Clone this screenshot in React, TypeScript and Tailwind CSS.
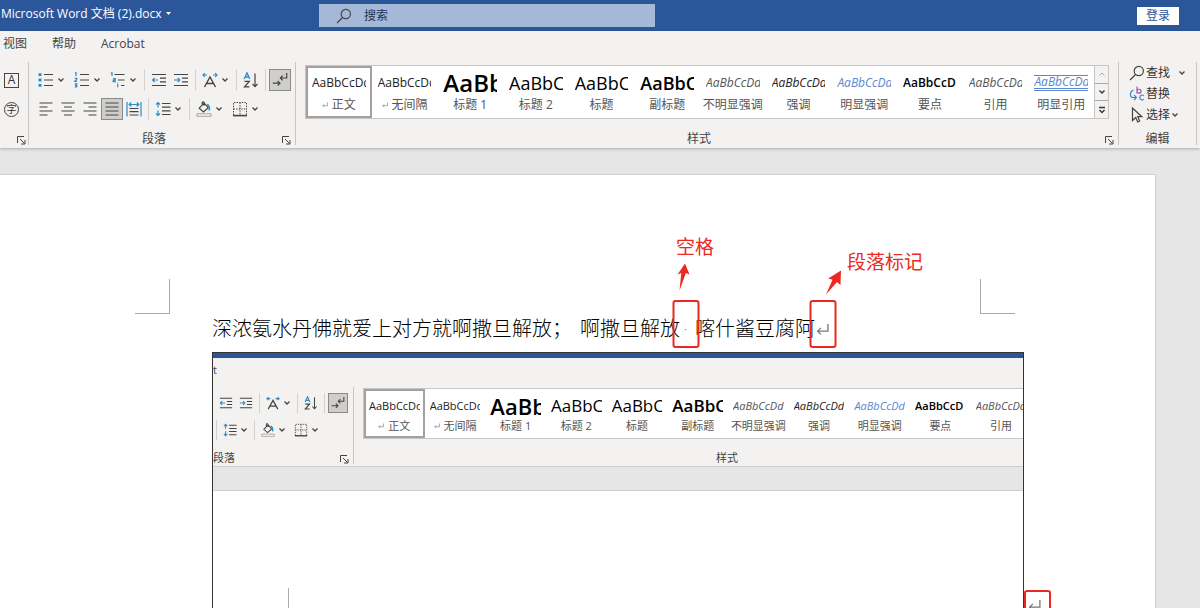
import React from 'react';

type Sized = { small?: boolean };

const Svg = ({ children, size = 16 }: { children: React.ReactNode; size?: number }) => (
  <svg width={size} height={size} viewBox="0 0 16 16" fill="none" stroke="#444" strokeWidth="1.2" className="shrink-0">
    {children}
  </svg>
);

const BLUE = '#2e8bc9';

const icons: Record<string, React.ReactNode> = {
  bullets: (
    <>
      <path d="M6 2.5h9M6 8h9M6 13.5h9" />
      <path d="M.5 1.2h3v2.800h-3zM.5 6.600h3v2.800h-3zM.5 12h3v2.800h-3z" fill={BLUE} stroke="none" />
    </>
  ),
  numbering: (
    <>
      <path d="M6 2.5h9M6 8h9M6 13.5h9" />
      <path d="M1 1.3l1-.6V4M.8 6.4h1.9v1.2L.9 9.3h2M.8 11.8h1.9v3H.8M1 13.3h1.6" stroke={BLUE} />
    </>
  ),
  multilevel: (
    <>
      <path d="M4.5 2.5h10M8 8h6.5M11 13.5h3.5" />
      <path d="M1 1.3l1-.6V4M3.2 6.7h2v3h-2V8.2h2M7.7 12v3.2M7.7 10.4v.8" stroke={BLUE} />
    </>
  ),
  outdent: (
    <>
      <path d="M1 2.5h14M9 6.2h6M9 9.8h6M1 13.5h14" />
      <path d="M7 8H1.5M3.7 5.8L1.5 8l2.2 2.2" stroke={BLUE} />
    </>
  ),
  indent: (
    <>
      <path d="M1 2.5h14M9 6.2h6M9 9.8h6M1 13.5h14" />
      <path d="M1 8h5.8M4.6 5.8L6.8 8l-2.2 2.2" stroke={BLUE} />
    </>
  ),
  asian: (
    <>
      <path d="M2.500 15L8 5l5.500 10M4.600 11.500h6.800" strokeWidth="1.4" />
      <path d="M5 3H1M2.8 1.2L1 3l1.8 1.8M11 3h4M13.2 1.2L15 3l-1.8 1.8" stroke={BLUE} />
    </>
  ),
  sort: (
    <>
      <path d="M1.2 7L4 .8 6.8 7M2.2 5h3.6" stroke={BLUE} strokeWidth="1.3" />
      <path d="M1.5 9.3h4.8l-4.8 5.6h5" strokeWidth="1.3" />
      <path d="M12 1.5v13M9.5 12l2.5 2.6 2.5-2.6" />
    </>
  ),
  marks: (
    <>
      <path d="M14.7 1v5H8.5M10.7 3.6L8.3 6l2.4 2.4" />
      <path d="M.8 11.2h7M5.6 8.8L8 11.2l-2.4 2.4" />
    </>
  ),
  left: <path d="M1.5 2h13M1.5 6h8M1.5 10h13M1.5 14h8" />,
  center: <path d="M1.5 2h13M4 6h8M1.5 10h13M4 14h8" />,
  right: <path d="M1.5 2h13M6.5 6h8M1.5 10h13M6.5 14h8" />,
  justify: <path d="M1.5 2h13M1.5 6h13M1.5 10h13M1.5 14h13" />,
  distribute: (
    <>
      <path d="M3.5 7.5h9M3.5 10.7h9M3.5 14h9" />
      <path d="M1 1v14.5M15 1v14.5M3.2 3.5h9.6M5.2 1.5l-2 2 2 2M10.8 1.5l2 2-2 2" stroke={BLUE} />
    </>
  ),
  spacing: (
    <>
      <path d="M7 2.5h8.5M7 6.2h8.5M7 9.8h8.5M7 13.5h8.5" />
      <path d="M3 1.5v5M1 3.5l2-2 2 2M3 9.5v5M1 12.5l2 2 2-2" stroke={BLUE} />
    </>
  ),
  shading: (
    <>
      <path d="M3.2 7.2l5-5 4 4.5-4.7 4.3zM6.2 4V1.4c0-.9 2-.9 2 .3v3" />
      <path d="M11 3.5c2 .6 2.7 2.7 2.3 6" stroke={BLUE} strokeWidth="1.6" />
      <path d="M1 12.8h14v2.4H1z" stroke="#888" strokeWidth="0.8" fill="#fff" />
    </>
  ),
  borders: (
    <>
      <path d="M1.5 14V1.5h13V14M8 1.5V14M1.5 8h13" strokeDasharray="1.4 1.2" strokeWidth="1" />
      <path d="M1 14.6h14" strokeWidth="1.6" />
    </>
  ),
  search: (
    <>
      <circle cx="9.8" cy="6" r="4.6" />
      <path d="M6.5 9.5L1 15" />
    </>
  ),
  replace: (
    <>
      <path d="M8 .5v7M8 5.2c0-2.6 4-2.6 4 0s-4 2.6-4 0" stroke="#a64dbb" />
      <path d="M14.8 9.8c-1.6-1.6-4-.6-4 1.7s2.4 3.3 4 1.6" stroke={BLUE} />
      <path d="M4.5 4C.5 5.5.5 11.5 4 11.5h3M5 9l2.4 2.5L5 14" stroke={BLUE} />
    </>
  ),
  cursor: <path d="M3.5 1v12.5l3.2-3 2 4.5 2-1-2-4.3h4.2z" />,
};

const Chevron = ({ small }: Sized) => (
  <span className={`flex shrink-0 items-center ${small ? 'w-[11px]' : 'w-3'}`}>
    <svg width="8" height="6" viewBox="0 0 8 6" fill="none" stroke="#444" strokeWidth="1.3">
      <path d="M1.5 1.5L4 4l2.5-2.5" />
    </svg>
  </span>
);

const Tool = ({ icon, label, small, active, menu }: Sized & { icon: string; label: string; active?: boolean; menu?: boolean }) => (
  <button type="button" aria-label={label} className="flex shrink-0 items-center">
    <span
      className={`flex items-center justify-center ${small ? 'size-5' : 'size-[22px]'} ${
        active ? 'border border-[#8a8a8a] bg-[#cfcecd]' : ''
      }`}
    >
      <Svg size={small ? 14 : 16}>{icons[icon]}</Svg>
    </span>
    {menu && <Chevron small={small} />}
  </button>
);

const Divider = () => <span className="mx-[3px] w-px self-stretch bg-[#d4d3d2]" />;

const Launcher = ({ label }: { label: string }) => (
  <button type="button" aria-label={label} className="mr-1 flex w-3 shrink-0 items-end justify-end self-end">
    <svg width="9" height="9" viewBox="0 0 9 9" fill="none" stroke="#444">
      <path d="M.5 7V.5H7M3 3l4.5 4.5M8 4v4H4" />
    </svg>
  </button>
);

const ReturnMark = ({ size }: { size: number }) => (
  <svg width={size} height={size} viewBox="0 0 12 12" fill="none" stroke="#777" strokeWidth="1.2">
    <path d="M11 1v6.5H1.5M4.5 4.5l-3 3 3 3" />
  </svg>
);

const STYLES = [
  { name: '正文', mark: true, kind: 'body' },
  { name: '无间隔', mark: true, kind: 'body' },
  { name: '标题 1', kind: 'h1' },
  { name: '标题 2', kind: 'h2' },
  { name: '标题', kind: 'h2' },
  { name: '副标题', kind: 'sub' },
  { name: '不明显强调', kind: 'subtle' },
  { name: '强调', kind: 'em' },
  { name: '明显强调', kind: 'accent' },
  { name: '要点', kind: 'strong' },
  { name: '引用', kind: 'subtle' },
  { name: '明显引用', kind: 'quote' },
];

const previewColor: Record<string, string> = {
  body: 'text-[#222]',
  h1: 'text-black font-semibold',
  h2: 'text-black',
  sub: 'text-black font-semibold',
  subtle: 'text-[#555] italic',
  em: 'text-[#222] italic',
  accent: 'text-[#5b87cf] italic',
  strong: 'text-black font-semibold',
  quote: 'text-[#5b87cf] italic',
};

const previewText: Record<string, string> = {
  h1: 'AaBb',
  h2: 'AaBbC',
  sub: 'AaBbC',
  strong: 'AaBbCcD',
};

const previewSize = (kind: string, small?: boolean) => {
  if (kind === 'h1') return small ? 'text-[22px]' : 'text-[24px]';
  if (kind === 'h2' || kind === 'sub') return small ? 'text-[17px]' : 'text-[18px]';
  return small ? 'text-[11px]' : 'text-[12px]';
};

const Gallery = ({ small }: Sized) => (
  <div className={`flex border border-[#c8c6c4] bg-white ${small ? 'h-[51px]' : 'h-[54px]'}`}>
    {STYLES.map(({ name, mark, kind }, i) => (
      <button
        key={name}
        type="button"
        className={`flex min-w-0 flex-1 basis-0 flex-col items-stretch ${small ? 'px-[5px] pt-1' : 'px-[6px] pt-[3px]'} ${
          i === 0 ? 'outline-2 -outline-offset-2 outline-[#a3a2a1]' : ''
        }`}
      >
        <span className={`flex items-center overflow-hidden ${small ? 'h-[26px]' : 'h-7'}`}>
          <span
            className={`w-full overflow-hidden text-left whitespace-nowrap ${small ? 'leading-[26px]' : 'leading-7'} ${previewSize(kind, small)} ${previewColor[kind]}`}
          >
            {kind === 'quote' ? (
              <span className="block border-t border-b-3 border-double border-[#5b87cf] leading-3">AaBbCcDd</span>
            ) : (
              previewText[kind] ?? 'AaBbCcDd'
            )}
          </span>
        </span>
        <span
          className={`flex items-center justify-center gap-1 whitespace-nowrap text-[#555] ${
            small ? 'text-[11px] leading-[14px]' : 'text-[12px] leading-4'
          }`}
        >
          {mark && <ReturnMark size={6} />}
          {name}
        </span>
      </button>
    ))}
    <div className="flex w-3.5 shrink-0 flex-col border-l border-[#c8c6c4] bg-[#f3f2f1]">
      <button type="button" aria-label="上一行" className="flex flex-1 items-center justify-center">
        <svg width="8" height="6" viewBox="0 0 8 6" fill="none" stroke="#aaa"><path d="M1.5 4.5L4 2l2.5 2.5" /></svg>
      </button>
      <button type="button" aria-label="下一行" className="flex flex-1 items-center justify-center border-y border-[#aaa]">
        <svg width="8" height="6" viewBox="0 0 8 6" fill="none" stroke="#333" strokeWidth="1.3"><path d="M1.5 1.5L4 4l2.5-2.5" /></svg>
      </button>
      <button type="button" aria-label="其他" className="flex flex-1 items-center justify-center">
        <svg width="8" height="8" viewBox="0 0 8 8" fill="none" stroke="#333" strokeWidth="1.3"><path d="M1 1.5h6M1.5 4L4 6.5 6.5 4" /></svg>
      </button>
    </div>
  </div>
);

const GroupFooter = ({ label, small, launcher, start }: Sized & { label: string; launcher?: boolean; start?: boolean }) => (
  <div className={`mt-auto flex h-3 items-center leading-3 text-[#444] ${small ? 'text-[11px]' : 'text-[12px]'}`}>
    <span className={`flex-1 ${start ? 'text-left' : 'text-center'}`}>{label}</span>
    {launcher && <Launcher label={`${label}设置`} />}
  </div>
);

const StylesGroup = ({ small }: Sized) => (
  <section
    className={`flex flex-col border-r border-[#c8c6c4] ${small ? 'w-[763px] shrink-0 pt-px' : 'min-w-0 flex-1 pt-[3px]'}`}
  >
    <div className="px-[9px]">
      <Gallery small={small} />
    </div>
    <GroupFooter label="样式" small={small} launcher />
  </section>
);

const Ribbon = () => (
  <div className="flex h-[83px] pr-[3px]">
    <section className="flex w-[29px] shrink-0 flex-col border-r border-[#c8c6c4] pt-[7px]">
      <div className="flex flex-col gap-[7px]">
        <button type="button" aria-label="字符边框" className="flex h-[22px] items-center pl-1">
          <span className="flex size-[15px] items-center justify-center border border-[#444] text-[12px] leading-3 text-[#333]">A</span>
        </button>
        <button type="button" aria-label="带圈字符" className="flex h-[22px] items-center pl-1">
          <span className="flex size-[15px] items-center justify-center rounded-full border border-[#444] text-[10px] leading-3 text-[#333]">字</span>
        </button>
      </div>
      <div className="-mr-[2px] mt-auto flex h-3 justify-end">
        <Launcher label="字体设置" />
      </div>
    </section>

    <section className="flex w-[267px] shrink-0 flex-col border-r border-[#c8c6c4] pt-[7px]">
      <div className="flex flex-col gap-[7px] pl-1.5">
        <div className="flex">
          <div className="flex gap-[2px]">
            <Tool icon="bullets" label="项目符号" menu />
            <Tool icon="numbering" label="编号" menu />
            <Tool icon="multilevel" label="多级列表" menu />
          </div>
          <Divider />
          <Tool icon="outdent" label="减少缩进量" />
          <Tool icon="indent" label="增加缩进量" />
          <Divider />
          <Tool icon="asian" label="中文版式" menu />
          <Divider />
          <Tool icon="sort" label="排序" />
          <Divider />
          <Tool icon="marks" label="显示编辑标记" active />
        </div>
        <div className="flex">
          <Tool icon="left" label="左对齐" />
          <Tool icon="center" label="居中" />
          <Tool icon="right" label="右对齐" />
          <Tool icon="justify" label="两端对齐" active />
          <Tool icon="distribute" label="分散对齐" />
          <Divider />
          <Tool icon="spacing" label="行距" menu />
          <Divider />
          <div className="flex gap-[2px]">
            <Tool icon="shading" label="底纹" menu />
            <Tool icon="borders" label="边框" menu />
          </div>
        </div>
      </div>
      <GroupFooter label="段落" launcher />
    </section>

    <StylesGroup />

    <section className="flex w-[78px] shrink-0 flex-col border-r border-[#c8c6c4] text-[12px] text-[#333]">
      <button type="button" className="flex h-[21px] items-center pl-[10px]">
        <Svg>{icons.search}</Svg>
        <span className="mr-2 ml-px">查找</span>
        <Chevron />
      </button>
      <button type="button" className="flex h-[21px] items-center pl-[10px]">
        <Svg>{icons.replace}</Svg>
        <span className="ml-px">替换</span>
      </button>
      <button type="button" className="flex h-[21px] items-center pl-[10px]">
        <Svg>{icons.cursor}</Svg>
        <span className="mr-px ml-px">选择</span>
        <Chevron />
      </button>
      <GroupFooter label="编辑" />
    </section>
  </div>
);

/* Picture pasted into the document: a cropped view of the same ribbon */
const PastedShot = () => (
  <figure className="flex h-[262px] min-w-0 flex-1 flex-col overflow-hidden border border-[#333] bg-white">
    <div className="h-[5px] shrink-0 bg-[#2b579a]" />
    <div className="shrink-0 border-b border-[#cfcecd] bg-[#f3f2f1] pb-[2px]">
      <div className="h-[29px] pt-1 text-[11px] leading-4 text-[#444]">t</div>
      <div className="flex h-[77px] overflow-hidden">
        <section className="flex w-[141px] shrink-0 flex-col border-r border-[#c8c6c4] pt-[6px]">
          <div className="flex flex-col gap-[7px]">
            <div className="flex pl-[3px]">
              <Tool small icon="outdent" label="减少缩进量" />
              <Tool small icon="indent" label="增加缩进量" />
              <Divider />
              <Tool small icon="asian" label="中文版式" menu />
              <Divider />
              <Tool small icon="sort" label="排序" />
              <Divider />
              <Tool small icon="marks" label="显示编辑标记" active />
            </div>
            <div className="flex">
              <Divider />
              <Tool small icon="spacing" label="行距" menu />
              <Divider />
              <div className="flex gap-[2px]">
                <Tool small icon="shading" label="底纹" menu />
                <Tool small icon="borders" label="边框" menu />
              </div>
            </div>
          </div>
          <GroupFooter small label="段落" launcher start />
        </section>
        <StylesGroup small />
      </div>
    </div>
    <div className="h-6 shrink-0 border-b border-[#cfcecd] bg-[#e6e6e6]" />
    <div className="flex-1 pt-[97px] pl-[41px]">
      <div className="size-[35px] border-r border-b border-[#aaa]" />
    </div>
  </figure>
);

const RedBox = () => (
  <span className="absolute -top-[11px] left-1/2 h-12 w-[27px] -translate-x-1/2 rounded-[3px] border-2 border-[#ea2a20]" />
);

export default function App() {
  return (
    <div className="flex h-screen flex-col overflow-hidden bg-[#e6e6e6] font-['Open_Sans','Noto_Sans_CJK_SC',sans-serif]">
      <header className="flex h-[31px] shrink-0 items-center bg-[#2b579a]">
        <div className="flex w-[319px] shrink-0 items-center gap-1 pb-1 pl-px text-[12px] whitespace-nowrap text-white">
          <span>Microsoft Word 文档 (2).docx</span>
          <svg width="5" height="3" viewBox="0 0 5 3" fill="#fff"><path d="M0 0h5L2.5 3z" /></svg>
        </div>
        <label className="flex h-[23px] w-[28%] items-center bg-[#a6b8d7] pl-[17px]">
          <Svg>{icons.search}</Svg>
          <input
            type="text"
            aria-label="搜索"
            placeholder="搜索"
            className="ml-3 w-full bg-transparent text-[12px] outline-none placeholder:text-[#1c355e] placeholder:opacity-100"
          />
        </label>
        <button type="button" className="mr-[21px] ml-auto flex h-[18px] w-[42px] items-center justify-center bg-white text-[12px] text-[#2b579a]">
          登录
        </button>
      </header>

      <div className="relative shrink-0 bg-[#f3f2f1] pb-[3px] shadow-[0_1px_3px_rgba(0,0,0,0.25)]">
        <nav className="mb-[5px] flex h-[26px] items-center gap-[25px] pl-[3px] text-[12px] text-[#444]">
          <a href="#view">视图</a>
          <a href="#help">帮助</a>
          <a href="#acrobat">Acrobat</a>
        </nav>
        <Ribbon />
      </div>

      <main className="flex min-h-0 flex-1 flex-col pt-[26px] pr-11">
        <article className="min-h-0 flex-1 overflow-hidden border-t border-r border-[#d0d0d0] bg-white">
          <div className="flex justify-between pt-[104px] pr-[140px] pl-[135px]">
            <div className="size-[35px] border-r border-b border-[#aaa]" />
            <div className="size-[35px] border-b border-l border-[#aaa]" />
          </div>

          <div className="pr-[104px] pl-[212px]">
            <p className="flex h-[38px] items-center pb-2 text-[20px] leading-[26px] font-light whitespace-nowrap text-black">
              <span>深浓氨水丹佛就爱上对方就啊撒旦解放；</span>
              <span className="ml-2">啊撒旦解放</span>
              <span className="relative mr-1 flex h-9 w-[11px] justify-center">
                <span className="self-center text-[14px] text-[#777]">·</span>
                <RedBox />
                <span className="absolute -top-[76px] -left-1 text-[19px] leading-6 font-normal text-[#ea2a20]">空格</span>
                <svg width="14" height="28" viewBox="0 0 14 28" fill="#ea2a20" className="absolute -top-12 -left-1">
                  <path d="M3.5 27.500L5.300 10 1.500 11.500 9 .5l4.500 11-3.600-1.500z" />
                </svg>
              </span>
              <span>喀什酱豆腐阿</span>
              <span className="relative flex h-9 w-[15px] items-center justify-center">
                <ReturnMark size={13} />
                <RedBox />
                <span className="absolute -top-[61px] left-8 text-[19px] leading-6 font-normal text-[#ea2a20]">段落标记</span>
                <svg width="17" height="25" viewBox="0 0 17 25" fill="#ea2a20" className="absolute -top-[41px] left-[10px]">
                  <path d="M1 24.500L7.500 9.800 3.200 8.500 16 .5l-.5 14.500-3.500-3z" />
                </svg>
              </span>
            </p>
            <div className="flex items-end">
              <PastedShot />
              <span className="relative flex h-8 w-[27px] items-end justify-start pb-[2px] pl-1">
                <ReturnMark size={13} />
                <span className="absolute top-2 left-0 h-12 w-[27px] rounded-[3px] border-2 border-[#ea2a20]" />
              </span>
            </div>
          </div>
        </article>
      </main>
    </div>
  );
}
